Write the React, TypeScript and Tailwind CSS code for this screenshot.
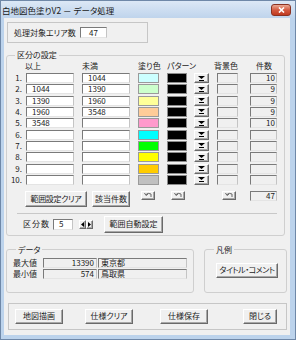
import React from 'react'

const sunken =
  'border border-t-[#7a7a7a] border-l-[#7a7a7a] border-r-[#c4c4c4] border-b-[#e4e4e4]'
const raised =
  'border border-t-white border-l-white border-r-[#6a6a6a] border-b-[#6a6a6a] shadow-[inset_-1px_-1px_0_#a8a8a8] bg-[#f0f0f0]'

type Row = { lo: string; hi: string; color: string; count: string }

const rows: Row[] = [
  { lo: '', hi: '1044', color: 'bg-[#ccffff]', count: '10' },
  { lo: '1044', hi: '1390', color: 'bg-[#ccffcc]', count: '9' },
  { lo: '1390', hi: '1960', color: 'bg-[#ffff99]', count: '9' },
  { lo: '1960', hi: '3548', color: 'bg-[#ffcc99]', count: '9' },
  { lo: '3548', hi: '', color: 'bg-[#ff99cc]', count: '10' },
  { lo: '', hi: '', color: 'bg-[#00ffff]', count: '' },
  { lo: '', hi: '', color: 'bg-[#00ff00]', count: '' },
  { lo: '', hi: '', color: 'bg-[#ffff00]', count: '' },
  { lo: '', hi: '', color: 'bg-[#ffcc00]', count: '' },
  { lo: '', hi: '', color: 'bg-[#c0c0c0]', count: '' },
]

function Btn({ className, children }: { className: string; children?: React.ReactNode }) {
  return (
    <div className={`${raised} shrink-0 flex items-center justify-center whitespace-nowrap ${className}`}>
      {children}
    </div>
  )
}

function Field({ className, children }: { className: string; children?: React.ReactNode }) {
  return (
    <div className={`${sunken} shrink-0 flex items-center overflow-hidden whitespace-nowrap ${className}`}>
      {children}
    </div>
  )
}

function DropArrow() {
  return (
    <svg width="7" height="5" viewBox="0 0 7 5">
      <polygon points="0,0 7,0 3.5,3" fill="#000" />
      <rect x="1" y="4" width="5" height="1" fill="#000" />
    </svg>
  )
}

// small "restore" arrow on the reset buttons
function Undo() {
  return (
    <svg width="8" height="6" viewBox="0 0 8 6">
      <path d="M2 2.5 Q4 0.5 7 2 V5" stroke="#666" fill="none" strokeWidth="1" />
      <path d="M0.5 1 L2 3.5 L4 2" stroke="#666" fill="none" strokeWidth="1" />
    </svg>
  )
}

export default function App() {
  return (
    <div className="w-[296px] h-[340px] bg-[#bcd3ec] border border-[#6f88a8] flex flex-col overflow-hidden font-['Noto_Sans_CJK_JP',sans-serif] text-[8px] leading-[10px] text-[#1c1c1c] [font-feature-settings:'palt']">
      {/* title bar */}
      <div className="h-[17px] shrink-0 flex justify-between bg-gradient-to-b from-[#dce8f6] to-[#bfd4ec] pl-[1px] pr-[4px]">
        <span className="self-center text-[8.5px] leading-[10px] text-[#1a1a1a]">白地図色塗りV2 － データ処理</span>
        <div className="mt-[3px] w-[20px] h-[12px] rounded-[3px] border border-[#8a3222] bg-gradient-to-b from-[#e9a893] via-[#d45a40] to-[#c0391f] flex items-center justify-center">
          <svg width="7" height="6" viewBox="0 0 7 6">
            <path d="M1 0.5 L6 5.5 M6 0.5 L1 5.5" stroke="#fff" strokeWidth="1.6" />
          </svg>
        </div>
      </div>

      {/* client area */}
      <div className="ml-[3px] mr-[5px] mb-[4px] flex-1 bg-[#f0f0f0] flex flex-col">
        {/* area count */}
        <div className="ml-[3px] mt-[4px] w-[141px] h-[21px] border border-[#c6c6c6] flex items-center pl-[6px]">
          <span className="w-[66px] shrink-0">処理対象エリア数</span>
          <Field className="w-[27px] h-[11px] justify-center bg-white">47</Field>
        </div>

        {/* class settings */}
        <fieldset className="ml-[2px] mt-[7px] w-[279px] min-w-0 border border-[#cfcfcf] rounded-[3px] pb-[2px]">
          <legend className="ml-[8px] px-[2px] leading-[10px]">区分の設定</legend>

          <div className="mt-[1px] h-[10px] flex pl-[18px]">
            <span className="w-[57px] shrink-0">以上</span>
            <span className="w-[56px] shrink-0">未満</span>
            <span className="w-[29px] shrink-0">塗り色</span>
            <span className="w-[47px] shrink-0">パターン</span>
            <span className="w-[42px] shrink-0">背景色</span>
            <span className="shrink-0">件数</span>
          </div>

          <div className="mt-[2px] flex flex-col gap-[1.33px]">
            {rows.map((r, i) => (
              <div key={i} className="h-[10px] flex items-stretch">
                <span className="w-[17px] shrink-0 text-right pr-[2px] leading-[10px]">{i + 1}.</span>
                <Field className="ml-[2px] w-[48px] bg-white pl-[5px]">{r.lo}</Field>
                <Field className="ml-[8px] w-[48px] bg-white pl-[5px]">{r.hi}</Field>
                <div className={`ml-[8px] w-[21px] shrink-0 border border-[#9a9a9a] ${r.color}`} />
                <div className="ml-[8px] w-[20px] shrink-0 border border-[#8c8c8c] bg-black" />
                <Btn className="ml-[7px] w-[15px]">
                  <DropArrow />
                </Btn>
                <Field className="ml-[8px] w-[21px] bg-[#f0f0f0]" />
                <Field className="ml-[12px] w-[27px] bg-[#f0f0f0] justify-end pr-[1px]">{r.count}</Field>
              </div>
            ))}
          </div>

          <div className="mt-[6px] h-[16px] flex items-start">
            <Btn className="ml-[18px] w-[62px] h-[16px] tracking-[-0.3px]">範囲設定クリア</Btn>
            <Btn className="ml-[5px] w-[38px] h-[16px]">該当件数</Btn>
            <Btn className="ml-[11px] w-[14px] h-[9px]">
              <Undo />
            </Btn>
            <Btn className="ml-[16px] w-[14px] h-[9px]">
              <Undo />
            </Btn>
            <Btn className="ml-[37px] w-[14px] h-[9px]">
              <Undo />
            </Btn>
            <Field className="ml-[14px] w-[27px] h-[10px] bg-[#f0f0f0] justify-end pr-[1px]">47</Field>
          </div>

          <div className="mt-[6px] ml-[10px] w-[260px] h-[1px] bg-[#c8c8c8]" />

          <div className="mt-[2px] h-[17px] flex items-center">
            <span className="ml-[16px] w-[30px] shrink-0 tracking-[1px]">区分数</span>
            <Field className="w-[20px] h-[11px] bg-white pl-[5px]">5</Field>
            <div className="ml-[6px] flex">
              <Btn className="w-[7px] h-[9px]">
                <svg width="3" height="5" viewBox="0 0 3 5">
                  <polygon points="3,0 3,5 0,2.5" fill="#000" />
                </svg>
              </Btn>
              <Btn className="w-[7px] h-[9px]">
                <svg width="3" height="5" viewBox="0 0 3 5">
                  <polygon points="0,0 0,5 3,2.5" fill="#000" />
                </svg>
              </Btn>
            </div>
            <Btn className="ml-[11px] w-[59px] h-[17px]">範囲自動設定</Btn>
          </div>
        </fieldset>

        {/* data & legend */}
        <div className="mt-[9px] flex">
          <fieldset className="ml-[2px] w-[188px] h-[48px] min-w-0 border border-[#cfcfcf] rounded-[3px]">
            <legend className="ml-[9px] px-[2px] leading-[10px]">データ</legend>
            <div className="mt-[3px] flex flex-col gap-[1px]">
              <div className="h-[10px] flex items-stretch">
                <span className="ml-[6px] w-[30px] shrink-0">最大値</span>
                <Field className="w-[54px] bg-[#f0f0f0] justify-end pr-[2px]">13390</Field>
                <Field className="ml-[1px] w-[89px] bg-[#f0f0f0] pl-[2px]">東京都</Field>
              </div>
              <div className="h-[10px] flex items-stretch">
                <span className="ml-[6px] w-[30px] shrink-0">最小値</span>
                <Field className="w-[54px] bg-[#f0f0f0] justify-end pr-[2px]">574</Field>
                <Field className="ml-[1px] w-[89px] bg-[#f0f0f0] pl-[2px]">鳥取県</Field>
              </div>
            </div>
          </fieldset>

          <fieldset className="ml-[10px] w-[83px] h-[48px] min-w-0 border border-[#cfcfcf] rounded-[3px]">
            <legend className="ml-[9px] px-[2px] leading-[10px]">凡例</legend>
            <Btn className="mt-[8px] ml-[11px] w-[62px] h-[15px] tracking-[-0.5px]">タイトル・コメント</Btn>
          </fieldset>
        </div>

        {/* bottom buttons */}
        <div className="ml-[4px] mt-[10px] w-[279px] h-[27px] border border-[#c6c6c6] flex items-center">
          <Btn className="ml-[6px] w-[48px] h-[15px]">地図描画</Btn>
          <Btn className="ml-[22px] w-[48px] h-[15px]">仕様クリア</Btn>
          <Btn className="ml-[27px] w-[48px] h-[15px]">仕様保存</Btn>
          <Btn className="ml-[35px] w-[34px] h-[15px]">閉じる</Btn>
        </div>
      </div>
    </div>
  )
}
